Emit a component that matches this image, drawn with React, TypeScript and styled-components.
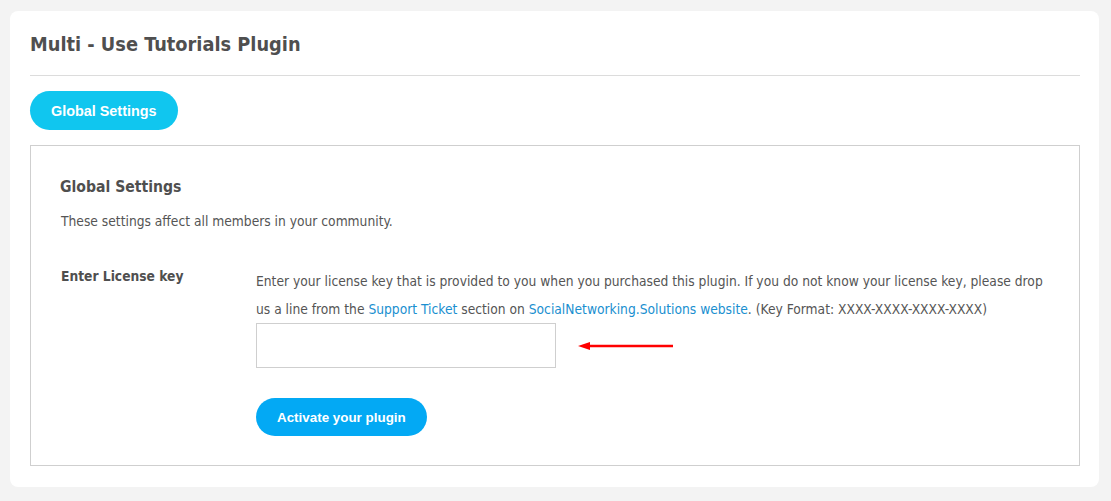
import React from 'react';
import styled, { createGlobalStyle } from 'styled-components';

const GlobalStyle = createGlobalStyle`
  html, body {
    margin: 0;
    padding: 0;
    background: #f3f3f3;
  }
  body {
    font-family: "DejaVu Sans Condensed", "DejaVu Sans", sans-serif;
    color: #555;
  }
`;

const Page = styled.div`
  padding: 11px 12px 14px 10px;
`;

const Card = styled.div`
  background: #fff;
  border-radius: 8px;
  padding: 0 19px 21px 20px;
`;

const Title = styled.h1`
  margin: 0;
  padding: 22px 0 18px;
  font-size: 19.8px;
  font-weight: bold;
  line-height: 24px;
  color: #4f4f4f;
  border-bottom: 1px solid #dcdcdc;
`;

const TabRow = styled.div`
  padding: 15px 0 15px;
`;

const PillButton = styled.button<{ $bg: string; $size: number; $h: number }>`
  border: none;
  background: ${({ $bg }) => $bg};
  color: #fff;
  font-family: "Liberation Sans", Arial, sans-serif;
  font-weight: bold;
  font-size: ${({ $size }) => $size}px;
  border-radius: 20px;
  padding: 0 21px;
  height: ${({ $h }) => $h}px;
  cursor: pointer;
`;

const SettingsBox = styled.div`
  border: 1px solid #cfcfcf;
  padding: 31px 29px 29px 29px;
`;

const BoxTitle = styled.h2`
  margin: 0;
  font-size: 15.6px;
  font-weight: bold;
  line-height: 20px;
  color: #4f4f4f;
`;

const Description = styled.p`
  margin: 14px 0 0 1px;
  font-size: 13.7px;
  line-height: 20px;
`;

const FieldRow = styled.div`
  display: grid;
  grid-template-columns: 196px 1fr;
  margin-top: 36px;
`;

const Label = styled.div`
  font-size: 13.7px;
  font-weight: bold;
  line-height: 18px;
  color: #4f4f4f;
  padding-left: 1px;
`;

const Field = styled.div`
  display: flex;
  flex-direction: column;
  align-items: flex-start;
`;

const Help = styled.p`
  margin: 0;
  font-size: 13.7px;
  line-height: 28px;
`;

const Link = styled.a`
  color: #1a8fd0;
  text-decoration: none;
`;

const InputRow = styled.div`
  display: flex;
  align-items: center;
  gap: 22px;
  margin-bottom: 30px;
`;

const KeyInput = styled.input`
  box-sizing: border-box;
  width: 300px;
  height: 45px;
  border: 1px solid #cfcfcf;
  outline: none;
`;

const App: React.FC = () => {
  return (
    <Page>
      <GlobalStyle />
      <Card>
        <Title>Multi - Use Tutorials Plugin</Title>
        <TabRow>
          <PillButton $bg="#10c6ef" $size={14.4} $h={39}>Global Settings</PillButton>
        </TabRow>
        <SettingsBox>
          <BoxTitle>Global Settings</BoxTitle>
          <Description>These settings affect all members in your community.</Description>
          <FieldRow>
            <Label>Enter License key</Label>
            <Field>
              <Help>
                Enter your license key that is provided to you when you purchased this plugin. If you do not know your license key, please drop us a line from the{' '}
                <Link href="#">Support Ticket</Link> section on{' '}
                <Link href="#">SocialNetworking.Solutions website</Link>. (Key Format: XXXX-XXXX-XXXX-XXXX)
              </Help>
              <InputRow>
                <KeyInput type="text" />
                <svg width="96" height="8" viewBox="0 0 96 8">
                  <line x1="10" y1="4" x2="95" y2="4" stroke="#f00" strokeWidth="2.5" />
                  <polygon points="0,4 12,0 12,8" fill="#f00" />
                </svg>
              </InputRow>
              <PillButton $bg="#03a9f4" $size={13.4} $h={38}>Activate your plugin</PillButton>
            </Field>
          </FieldRow>
        </SettingsBox>
      </Card>
    </Page>
  );
};

export default App;
